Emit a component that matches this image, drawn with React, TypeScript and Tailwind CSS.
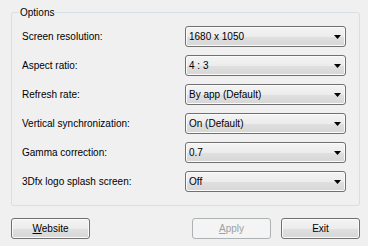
import React from "react";

const ROWS = [
  { label: "Screen resolution:", value: "1680 x 1050" },
  { label: "Aspect ratio:", value: "4 : 3" },
  { label: "Refresh rate:", value: "By app (Default)" },
  { label: "Vertical synchronization:", value: "On (Default)" },
  { label: "Gamma correction:", value: "0.7" },
  { label: "3Dfx logo splash screen:", value: "Off" },
];

const face =
  "bg-[linear-gradient(#f4f4f4_0%,#ececec_50%,#e0e0e0_52%,#d6d6d6_100%)] shadow-[inset_0_0_0_1px_#fbfbfb]";

function Combo({ value }: { value: string }) {
  return (
    <div
      className={`flex h-[21px] w-[161px] items-center justify-between rounded-[3px] border border-[#707070] pl-[3px] pr-[4px] ${face}`}
    >
      <span className="leading-[13px]">{value}</span>
      <svg width="7" height="4" viewBox="0 0 7 4">
        <polygon points="0,0 7,0 3.5,4" fill="#000" />
      </svg>
    </div>
  );
}

function Button({
  children,
  disabled,
}: {
  children: React.ReactNode;
  disabled?: boolean;
}) {
  return (
    <button
      className={
        disabled
          ? "flex h-[21px] w-[79px] items-center justify-center rounded-[3px] border border-[#adb2b5] bg-[#f4f4f4] text-[#a0a0a0]"
          : `flex h-[21px] w-[79px] items-center justify-center rounded-[3px] border border-[#707070] ${face}`
      }
    >
      {children}
    </button>
  );
}

export default function App() {
  return (
    <div
      className="flex h-[246px] w-[368px] flex-col bg-[#f0f0f0] pl-[11px] pr-[8px] pt-[6px] text-[10px] text-black"
      style={{ fontFamily: '"Liberation Sans", Arial, sans-serif' }}
    >
      <fieldset className="rounded-[3px] border border-[#d5dfe5] px-[10px] pb-[13px] pt-[7px]">
        <legend className="-ml-[3px] px-[1px] leading-[13px]">Options</legend>
        <div className="flex flex-col gap-[8px]">
          {ROWS.map((r) => (
            <div key={r.label} className="flex items-center">
              <span className="w-[163px] leading-[13px]">{r.label}</span>
              <Combo value={r.value} />
            </div>
          ))}
        </div>
      </fieldset>

      <div className="mt-[12px] flex items-center">
        <Button>
          <span>
            <span className="underline">W</span>ebsite
          </span>
        </Button>
        <div className="ml-auto flex gap-[10px]">
          <Button disabled>
            <span>
              <span className="underline">A</span>pply
            </span>
          </Button>
          <Button>Exit</Button>
        </div>
      </div>
    </div>
  );
}
